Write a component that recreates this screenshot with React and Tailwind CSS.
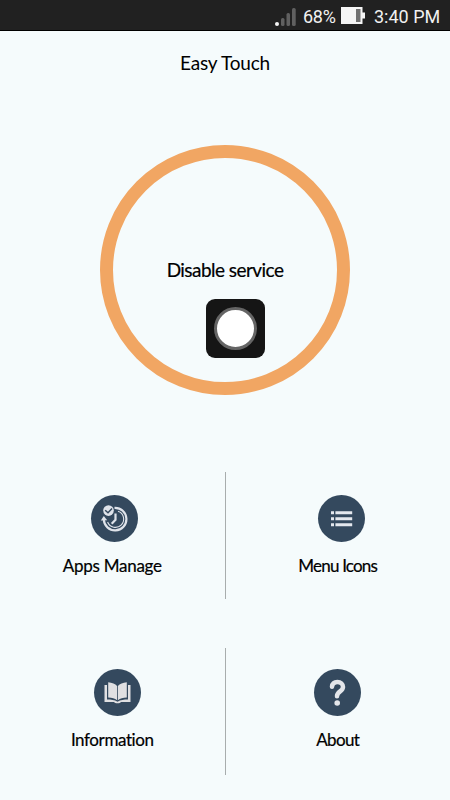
import React from 'react';

const AppsIcon = () => (
    <svg viewBox="0 0 47 47" className="w-[47px] h-[47px]" fill="none" stroke="#dfe3ea">
        <path d="M23.5 12.800A11.300 11.300 0 1 1 12.800 24.500" strokeWidth="2.200" />
        <path d="M27 16.200A8.300 8.300 0 1 1 16.600 27" strokeWidth="1.100" />
        <path d="M9.800 25.500l3-4.400 3.400 4.100z" fill="#dfe3ea" stroke="none" />
        <path d="M24.500 18.500v6.300l-3.800 4" strokeWidth="2.200" />
        <circle cx="17.500" cy="15.600" r="5.300" fill="#dfe3ea" stroke="none" />
        <path d="M14.200 15.200l2.800 2.600 4-4.200" stroke="#34495e" strokeWidth="1.500" />
    </svg>
);

const MenuIcon = () => (
    <svg viewBox="0 0 47 47" className="w-[47px] h-[47px]" fill="#e4e8ee">
        <path d="M13 16.300h3v3h-3zM13 22.300h3v3h-3zM13 28.300h3v3h-3z" />
        <path d="M17.400 16.300h16.800v3H17.400zM17.400 22.300h16.800v3H17.400zM17.400 28.300h16.800v3H17.400z" />
    </svg>
);

const BookIcon = () => (
    <svg viewBox="0 0 47 47" className="w-[47px] h-[47px]" fill="#e0e0e2">
        <path d="M10.500 16H13v14.500c4 0 7.500.4 10.500 2.200 3-1.800 6.500-2.200 10.500-2.200V16h2.500v17H27c-.8 1.800-6.200 1.800-7 0h-9.500z" />
        <path d="M14.200 13.300c4 .4 7 1.500 8.900 3.700v14.300c-2.300-1.800-5-2.500-8.900-2.700z" />
        <path d="M32.800 13.300c-4 .4-7 1.500-8.900 3.700v14.300c2.300-1.800 5-2.500 8.900-2.700z" />
    </svg>
);

const QuestionIcon = () => (
    <svg viewBox="0 0 47 47" className="w-[47px] h-[47px]" fill="none">
        <path
            d="M18 17.800c.4-3.300 2.600-4.700 5.400-4.700 3.300 0 5.600 1.900 5.600 4.900 0 4.400-6 4.400-6 9.200"
            stroke="#e4e6ea"
            strokeWidth="4.500"
            strokeLinecap="round"
        />
        <circle cx="23.200" cy="34" r="2.800" fill="#e4e6ea" />
    </svg>
);

const StatusBar = () => (
    <div className="flex h-[31px] items-center bg-[#212121] border-b border-black pl-[275px] text-[#f1f1f1] font-[Roboto]">
        <svg viewBox="0 0 22 20" className="w-[22px] h-5 mt-[5px]" fill="#606060">
            <rect x="0" y="14" width="4" height="4" rx="2" fill="#f5f5f5" />
            <rect x="6" y="10" width="3.500" height="8" rx="1.500" />
            <rect x="11.500" y="5" width="3.500" height="13" rx="1.500" />
            <rect x="17" y="0" width="3.700" height="18" rx="1.500" />
        </svg>
        <span className="ml-[6px] mt-[3px] w-[38px] text-[18px] leading-none whitespace-nowrap tracking-[-0.3px]">68%</span>
        <svg viewBox="0 0 25 17" className="w-[25px] h-[17px]">
            <path d="M0 0h21.500v5.500H24v6h-2.500V17H0z" fill="#f5f5f5" />
            <rect x="15" y="2" width="4.500" height="13" fill="#707070" />
        </svg>
        <span className="ml-[8px] mt-[3px] text-[18px] leading-none whitespace-nowrap">3:40 PM</span>
    </div>
);

const MenuItem = ({ icon, label, iconClass, labelClass }) => (
    <button className="flex flex-1 flex-col items-center">
        <span className={`rounded-full bg-[#34495e] ${iconClass}`}>{icon}</span>
        <span className={`mt-[14px] text-[17px] leading-5 whitespace-nowrap [font-variant-ligatures:none] [-webkit-text-stroke:0.2px_black] ${labelClass}`}>
            {label}
        </span>
    </button>
);

const App = () => {
    return (
        <div className="flex flex-col h-[800px] w-[450px] overflow-hidden bg-[#f5fbfc] text-black font-[Lato,sans-serif]">
            <StatusBar />

            <h1 className="mt-[20px] text-center text-[19px] leading-6 tracking-[-0.2px]">Easy Touch</h1>

            <div className="mt-[70px] mx-auto flex flex-col items-center w-[250px] h-[250px] shrink-0 rounded-full border-[13px] border-[#f1a663]">
                <p className="mt-[100px] text-[19px] leading-6 whitespace-nowrap tracking-[-0.55px] [-webkit-text-stroke:0.2px_black]">Disable service</p>
                <div className="mt-[17px] ml-[21px] flex items-center justify-center w-[59px] h-[59px] rounded-[9px] bg-[#151515]">
                    <div className="w-[43px] h-[43px] rounded-full bg-white border-3 border-[#656565]" />
                </div>
            </div>

            <div className="mt-[77px] flex h-[127px]">
                <div className="flex flex-1 pt-[23px]">
                    <MenuItem icon={<AppsIcon />} label="Apps Manage" iconClass="ml-[5px]" labelClass="tracking-[-0.25px]" />
                </div>
                <div className="w-px bg-[#a8adad]" />
                <div className="flex flex-1 pt-[23px]">
                    <MenuItem icon={<MenuIcon />} label="Menu Icons" iconClass="ml-[7px]" labelClass="tracking-[-0.8px]" />
                </div>
            </div>

            <div className="mt-[49px] flex h-[127px]">
                <div className="flex flex-1 pt-[21px]">
                    <MenuItem icon={<BookIcon />} label="Information" iconClass="ml-[11px]" labelClass="tracking-[-0.4px]" />
                </div>
                <div className="w-px bg-[#a8adad]" />
                <div className="flex flex-1 pt-[21px]">
                    <MenuItem icon={<QuestionIcon />} label="About" iconClass="" labelClass="tracking-[-0.6px]" />
                </div>
            </div>
        </div>
    );
};

export default App;
